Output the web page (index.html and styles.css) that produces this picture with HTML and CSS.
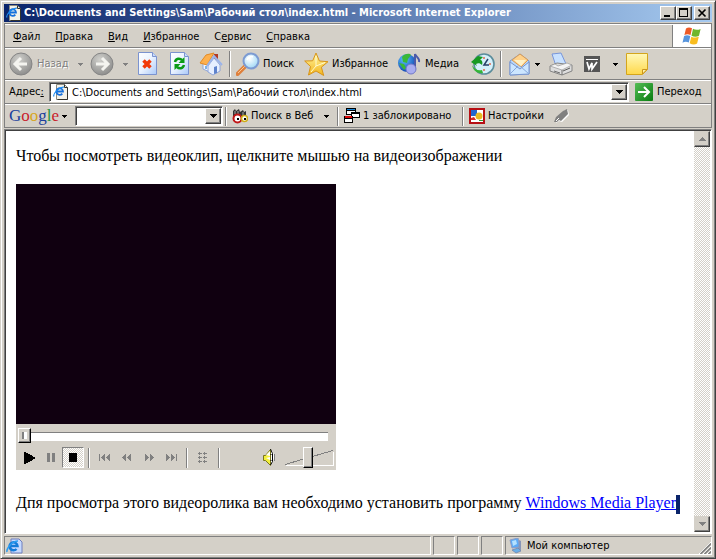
FILE: index.html
```html
<!DOCTYPE html>
<html lang="ru">
<head>
<meta charset="utf-8">
<title>C:\Documents and Settings\Sam\Рабочий стол\index.html - Microsoft Internet Explorer</title>
<link rel="stylesheet" href="styles.css">
</head>
<body>
<svg class="defs" aria-hidden="true">
  <defs>
    <linearGradient id="sheet" x1="0" y1="0" x2="1" y2="1"><stop offset="0" stop-color="#fff"/><stop offset=".5" stop-color="#e9f2ff"/><stop offset="1" stop-color="#a9c8f8"/></linearGradient>
    <radialGradient id="disc" cx=".4" cy=".3" r=".8"><stop offset="0" stop-color="#d0d0cc"/><stop offset=".6" stop-color="#a4a4a2"/><stop offset="1" stop-color="#858585"/></radialGradient>
    <linearGradient id="gold" x1="0" y1="0" x2="0" y2="1"><stop offset="0" stop-color="#fff6a0"/><stop offset="1" stop-color="#f3b51d"/></linearGradient>
    <linearGradient id="note" x1="0" y1="0" x2="0" y2="1"><stop offset="0" stop-color="#fff8b8"/><stop offset="1" stop-color="#ffd84a"/></linearGradient>
    <radialGradient id="lens" cx=".4" cy=".35" r=".7"><stop offset="0" stop-color="#fff"/><stop offset="1" stop-color="#9bd6f5"/></radialGradient>
    <radialGradient id="globe" cx=".35" cy=".3" r=".8"><stop offset="0" stop-color="#5fc3ff"/><stop offset="1" stop-color="#0536a8"/></radialGradient>
    <linearGradient id="go" x1="0" y1="0" x2="1" y2="1"><stop offset="0" stop-color="#55bd55"/><stop offset="1" stop-color="#087c10"/></linearGradient>
    <symbol id="page-e" viewBox="0 0 16 16">
      <path d="M3.5.5h8l3 3v12h-11z" fill="#f4f2ea" stroke="#8b8b80"/>
      <path d="M11.5.5v3h3M14.5 3.500v12h-10" fill="none" stroke="#34342e"/>
      <path d="M9.300 9.600a3.300 3.300 0 1 1 .7-2.100H4" fill="none" stroke="#1670dc" stroke-width="1.800"/>
      <path d="M1 12.500C-.5 10 6 3.200 11 3" fill="none" stroke="#1c8cf0" stroke-width="1.200"/>
    </symbol>
    <symbol id="down" viewBox="0 0 7 4"><path d="M0 0h7v1h-1v1h-1v1h-1v1h-1v-1h-1v-1h-1v-1h-1z" fill="currentColor" shape-rendering="crispEdges"/></symbol>
    <symbol id="down-s" viewBox="0 0 5 3"><path d="M0 0h5v1h-1v1h-1v1h-1v-1h-1v-1h-1z" fill="currentColor" shape-rendering="crispEdges"/></symbol>
    <symbol id="rew" viewBox="0 0 10 7"><path d="M4 0v7h-1v-1h-1v-1h-1v-1h-1v-1h1v-1h1v-1h1v-1zM9 0v7h-1v-1h-1v-1h-1v-1h-1v-1h1v-1h1v-1h1v-1z" fill="#808080" shape-rendering="crispEdges"/></symbol>
  </defs>
</svg>
<div class="window">
  <header class="titlebar">
    <svg class="i16"><use href="#page-e"/></svg>
    <h1>C:\Documents and Settings\Sam\Рабочий стол\index.html - Microsoft Internet Explorer</h1>
    <div class="caption-buttons">
      <button aria-label="Свернуть"><svg width="12" height="10" shape-rendering="crispEdges"><path d="M2 7h6v2h-6z"/></svg></button>
      <button aria-label="Развернуть"><svg width="12" height="10" shape-rendering="crispEdges"><path d="M1 0h9v9h-9zM2 2v6h7v-6z" fill-rule="evenodd"/></svg></button>
      <button class="close" aria-label="Закрыть"><svg width="12" height="10"><path d="M2.500 1.500l7 7m0-7l-7 7" stroke="#000" stroke-width="1.700"/></svg></button>
    </div>
  </header>

  <div class="bars">
    <div class="menu-row">
      <nav class="menu">
        <button><u>Ф</u>айл</button><button><u>П</u>равка</button><button><u>В</u>ид</button><button><u>И</u>збранное</button><button>С<u>е</u>рвис</button><button><u>С</u>правка</button>
      </nav>
      <div class="throbber">
        <svg width="22" height="20" viewBox="0 0 22 20"><path d="M5 2.500C7 1 9 1.200 11 2.300L9.500 9C7.500 8 5.500 8 3.400 9z" fill="#ee5a26"/><path d="M12 2.800c2.500 1.300 5 1.200 7.600.1L18 9.800c-2.500 1.200-5 1.100-7.500-.1z" fill="#70b62c"/><path d="M3.100 10c2-1 4-1 6.200 0L7.800 16.500c-2.200-1-4.200-1-6.300.2z" fill="#5795dd"/><path d="M10.300 10.700c2.500 1.100 5 1.200 7.500.1l-1.700 6.800c-2.500 1.300-5 1-7.400-.4z" fill="#f9bd20"/></svg>
      </div>
    </div>

    <div class="toolbar" role="toolbar">
      <button class="tool back" disabled>
        <svg width="24" height="24"><circle cx="12" cy="12" r="11" fill="url(#disc)" stroke="#858585"/><path d="M18 12H7m5-6l-6 6 6 6" fill="none" stroke="#f4f4f0" stroke-width="3"/></svg><span>Назад</span>
      </button>
      <button class="drop gray" aria-label="Список назад" disabled><svg width="5" height="3"><use href="#down-s"/></svg></button>
      <button class="tool forward" aria-label="Вперед" disabled><svg width="24" height="24"><circle cx="12" cy="12" r="11" fill="url(#disc)" stroke="#858585"/><path d="M6 12h11m-5-6l6 6-6 6" fill="none" stroke="#f4f4f0" stroke-width="3"/></svg></button>
      <button class="drop gray" aria-label="Список вперед" disabled><svg width="5" height="3"><use href="#down-s"/></svg></button>
      <button class="tool sheet" aria-label="Остановить"><svg width="20" height="24"><path d="M.5.500h14l4 4v18h-18z" fill="url(#sheet)" stroke="#7b93cf"/><path d="M14.500.5v4h4" fill="#c9dcfa" stroke="#7b93cf"/><path d="M5.500 8.500l7 7m0-7l-7 7" stroke="#f23a0a" stroke-width="3.500"/></svg></button>
      <button class="tool sheet" aria-label="Обновить"><svg width="20" height="24"><path d="M.5.500h14l4 4v18h-18z" fill="url(#sheet)" stroke="#7b93cf"/><path d="M14.500.5v4h4" fill="#c9dcfa" stroke="#7b93cf"/><path d="M5 10c1-4 5-4 7-2M14 13c-1 4-5 4-7 2" fill="none" stroke="#089b14" stroke-width="2.500"/><path d="M14.500 5v6h-6zM4.500 18v-6h6z" fill="#089b14"/></svg></button>
      <button class="tool home" aria-label="Домой"><svg width="24" height="24"><path d="M4 11l3-5 8 4v12l-11-5z" fill="#f3f7ff" stroke="#92a8d8"/><path d="M9 14l6-8 6 7v6l-7 4-5-3z" fill="#e6efff" stroke="#7d98d5" stroke-width=".8"/><path d="M15 2h4v7l-4-3z" fill="#b23a24"/><path d="M1 11L7 3l8-2-7 12z" fill="#fdb04e" stroke="#e28a25"/><path d="M8 14l7-10 8 9" fill="none" stroke="#9bb4ea" stroke-width="2"/><path d="M15 15l3-1v7l-3 1z" fill="#5f83cc"/><path d="M6 14h2v3H6z" fill="#7fb2e6"/></svg></button>
      <i class="sep"></i>
      <button class="tool search"><svg width="24" height="24"><path d="M1.500 22l8-8" stroke="#df803c" stroke-width="4" stroke-linecap="round"/><path d="M2 21l7-7" stroke="#ffc78c"/><circle cx="15" cy="9" r="7.500" fill="url(#lens)" stroke="#7d9bd2" stroke-width="2"/><path d="M11 8c1-3 4-4 6-3" fill="none" stroke="#fff" stroke-width="1.500"/></svg><span>Поиск</span></button>
      <button class="tool favorites"><svg width="25" height="25"><path d="M12 1l3.400 8 8.600.700-6.600 5.500 2.300 8.300L12 19l-7.500 4 2-8.500L.7 9l8-.2z" fill="url(#gold)" stroke="#d89418" stroke-linejoin="round"/><path d="M12 4v10l-5 6M12 14l9-3.500" fill="none" stroke="#fffbd0"/></svg><span>Избранное</span></button>
      <button class="tool media"><svg width="24" height="24"><circle cx="9" cy="11" r="9" fill="url(#globe)"/><path d="M4 5c3-4 8-4 9-2l-3 4-1 4-4-1zM1 11l5 1 2 4-2 2z" fill="#39b838"/><path d="M17 18V2c1 3 5 4 4 8" fill="none" stroke="#4b5aa9" stroke-width="2"/><circle cx="13" cy="17" r="5" fill="#a8adf0" stroke="#7178c8"/></svg><span>Медиа</span></button>
      <button class="tool history" aria-label="Журнал"><svg width="25" height="24"><circle cx="14" cy="12" r="10" fill="#d4effa" stroke="#5a8c9b" stroke-width="1.600"/><path d="M14 5v2m7 5h-2m-5 7v-2" stroke="#e46a4c" stroke-width="1.500"/><path d="M18 7l-4 6h5" fill="none" stroke="#263d66" stroke-width="1.500"/><path d="M1 10l7-6 5 1-3 3c2 0 3 2 2 5-2-2-4-2-6-1l1 2z" fill="#179a22"/><path d="M2 13c2 4 6 6 10 5l1 3C8 22 3 19 2 13z" fill="#36b538"/></svg></button>
      <i class="sep"></i>
      <button class="tool mail" aria-label="Почта"><svg width="22" height="24"><path d="M1 9l10-7 9 7v13L1 23z" fill="#b8d8fb" stroke="#7795cf"/><path d="M3 8l8-6 8 6-7 7z" fill="#ffd28b" stroke="#d89b55"/><path d="M5 8h12l-5 6z" fill="#fff1c5"/><path d="M1 10l10 7 9-7v12L1 23z" fill="#cce6ff" stroke="#7795cf"/><path d="M1 22l8-8m2 0l9 8" stroke="#86a8dc" fill="none"/></svg></button>
      <button class="drop" aria-label="Список почты"><svg width="5" height="3"><use href="#down-s"/></svg></button>
      <button class="tool printer" aria-label="Печать"><svg width="24" height="24"><path d="M3 2l9-1 5 11-10 2z" fill="#c8e1ff" stroke="#7896db"/><path d="M1 14l7-3 15 2v6l-10 4-12-4z" fill="#ddd" stroke="#858585"/><path d="M1 14l12 4 10-5-5-2-9 3-3-2z" fill="#f4f4f4" stroke="#999" stroke-width=".7"/><path d="M5 19l6 2m2-3v5" stroke="#6f6f6f"/><path d="M14 19l7-3" stroke="#5b5b5b"/></svg></button>
      <button class="tool word" aria-label="Правка в Word"><svg width="16" height="16"><path d="M0 0h16v16H0z" fill="#555"/><path d="M2 3.500h12" stroke="#fff"/><path d="M3 6l2 7 3-6v6l5-7" fill="none" stroke="#fff" stroke-width="1.700"/></svg></button>
      <button class="drop" aria-label="Список редакторов"><svg width="5" height="3"><use href="#down-s"/></svg></button>
      <button class="tool" aria-label="Заметка"><svg width="22" height="22"><path d="M.500.500h21v16l-5 5h-16z" fill="url(#note)" stroke="#d4a51c"/><path d="M16.500 21v-4.500h4.500z" fill="#fff2a5" stroke="#cc941d"/></svg></button>
    </div>

    <form class="address">
      <label for="url">Адрес<u>:</u></label>
      <div class="field">
        <svg class="i16"><use href="#page-e"/></svg>
        <input id="url" type="text" value="C:\Documents and Settings\Sam\Рабочий стол\index.html">
        <button type="button" class="raised" aria-label="Показать список"><svg width="7" height="4"><use href="#down"/></svg></button>
      </div>
      <button type="button" class="go"><svg width="18" height="18"><rect width="18" height="18" rx="1" fill="url(#go)"/><path d="M3 9h11M9 4l5 5-5 5" fill="none" stroke="#fff" stroke-width="2"/></svg><span>Переход</span></button>
    </form>

    <div class="google">
      <button class="logo"><span class="b">G</span><span class="r">o</span><span class="y">o</span><span class="b">g</span><span class="g">l</span><span class="r">e</span></button>
      <button class="drop" aria-label="Меню Google"><svg width="5" height="3"><use href="#down-s"/></svg></button>
      <div class="field query"><input type="text" aria-label="Запрос"><button class="raised" aria-label="История запросов"><svg width="7" height="4"><use href="#down"/></svg></button></div>
      <i class="sep"></i>
      <button class="gtool web"><svg width="16" height="16"><path d="M1 7V3l2-2 1 2 3-2 1 3 3-2 1 2 2-1v6H1z" fill="#333"/><path d="M3 3v3m3-3v3m5-2v3" stroke="#aaa"/><circle cx="5.500" cy="10.500" r="4" fill="#fff" stroke="#c01616" stroke-width="2"/><circle cx="12.500" cy="10.500" r="3" fill="#fff" stroke="#cfae15" stroke-width="1.500"/><path d="M5 10h2v2H5zm7 0h2v2h-2z"/></svg><span>Поиск в Веб</span></button>
      <button class="drop" aria-label="Виды поиска"><svg width="5" height="3"><use href="#down-s"/></svg></button>
      <i class="sep"></i>
      <button class="gtool popups"><svg width="16" height="16" shape-rendering="crispEdges"><path d="M2 0h10v7H2z"/><path d="M3 3h8v3H3z" fill="#fff"/><path d="M3 1h8v1H3z" fill="#1686d8"/><path d="M7 4h9v6H7z"/><path d="M8 6h7v3H8z" fill="#fff"/><path d="M0 8h9v7H0z"/><path d="M1 11h7v3H1z" fill="#fff"/><path d="M1 8h7v2H1z" fill="#d80808"/></svg><span>1 заблокировано</span></button>
      <i class="sep"></i>
      <button class="gtool settings"><svg width="16" height="16"><path d="M1 1h14v14H1z" fill="#fff" stroke="#b70f14" stroke-width="2"/><path d="M2 2h6v6H2z" fill="#2366ce"/><circle cx="10" cy="8" r="3.500" fill="#e8b922"/><path d="M2 10l3-1 2 3H2z" fill="#d62c25"/><path d="M10 12h4v1h-4z" fill="#2d9f3d"/></svg><span>Настройки</span></button>
      <button class="gtool" aria-label="Выделить"><svg width="16" height="16"><path d="M2 15l1-5 8-8h3l1 5-7 7-3-1z" fill="#fff"/><path d="M0 14l2-5 7-6 4-2 1 5-7 7-2-1-2 2z" fill="#808080"/><path d="M2 13l3-3" stroke="#fff"/></svg></button>
    </div>
  </div>

  <main class="viewport">
    <article class="page">
      <p>Чтобы посмотреть видеоклип, щелкните мышью на видеоизображении</p>
      <section class="player" aria-label="Проигрыватель">
        <div class="screen"></div>
        <div class="controls">
          <div class="seek"><input type="range" value="0" aria-label="Позиция"></div>
          <div class="keys">
            <button class="key" aria-label="Воспроизвести"><svg width="11" height="12" shape-rendering="crispEdges"><path d="M0 0h2v1h2v1h2v1h2v1h1v1h2v2H9v1H8v1H6v1H4v1H2v1H0z"/></svg></button>
            <button class="key" aria-label="Пауза" disabled><svg width="8" height="9"><path d="M0 0h3v9H0zM5 0h3v9H5z" fill="#808080"/></svg></button>
            <button class="key stop" aria-label="Стоп"><svg width="8" height="9"><path d="M0 0h8v9H0z"/></svg></button>
            <i class="sep"></i>
            <button class="key" aria-label="Предыдущий" disabled><svg width="12" height="7"><path d="M0 0h1v7H0z" fill="#808080"/><use href="#rew" x="2" width="10" height="7"/></svg></button>
            <button class="key" aria-label="Назад" disabled><svg width="10" height="7"><use href="#rew"/></svg></button>
            <button class="key" aria-label="Вперед" disabled><svg class="flip" width="10" height="7"><use href="#rew"/></svg></button>
            <button class="key" aria-label="Следующий" disabled><svg class="flip" width="12" height="7"><path d="M0 0h1v7H0z" fill="#808080"/><use href="#rew" x="2" width="10" height="7"/></svg></button>
            <i class="sep"></i>
            <button class="key" aria-label="Маркеры" disabled><svg width="10" height="11"><path d="M0 1.500h4m1 0h4M0 5.500h4m1 0h4M0 9.500h4m1 0h4M1.500 0v3M6.500 0v3M1.500 4v3M6.500 4v3M1.500 8v3M6.500 8v3" stroke="#808080" shape-rendering="crispEdges"/></svg></button>
            <i class="sep"></i>
            <button class="mute" aria-label="Звук"><svg width="12" height="17"><path d="M.5 6.500h2l5-6v16l-5-5h-2z" fill="#f3ef3c" stroke="#77751c"/><path d="M3 6l4-4v5zM3 9l4-1v3z" fill="#fff"/><path d="M8 0c4 5 4 11 0 16z" fill="#fff"/><path d="M7.500 0l2 4.500v8l-2 3.500M8 5v1m0 5v1" fill="none" stroke="#000"/><path d="M11.500 5v7" stroke="#808080"/></svg></button>
            <div class="volume"><svg width="49" height="16" shape-rendering="crispEdges"><path d="M1 15.500h47.500V2" fill="none" stroke="#fff"/><path d="M0 14.500L48 .5" stroke="#808080"/></svg><input type="range" value="47" aria-label="Громкость"></div>
          </div>
        </div>
      </section>
      <p class="note">Дпя просмотра этого видеоролика вам необходимо установить программу <a href="#player">Windows Media Player</a><i class="caret"></i></p>
    </article>
    <div class="scrollbar">
      <button class="raised" aria-label="Вверх" disabled><svg class="up" width="7" height="4"><use href="#down"/></svg></button>
      <button class="raised" aria-label="Вниз" disabled><svg width="7" height="4"><use href="#down"/></svg></button>
    </div>
  </main>

  <footer class="status">
    <div class="pane wide"><svg width="17" height="16"><path d="M5 1h8l3 3v11H5z" fill="#c5d9ff" stroke="#6e7fbd"/><path d="M10.500 11a4 4 0 1 1 1-3H3.500" fill="none" stroke="#147bd8" stroke-width="2.500"/><path d="M1 14C0 10 7 3 12 3" fill="none" stroke="#2b9df0" stroke-width="1.500"/></svg></div>
    <div class="pane"></div><div class="pane"></div><div class="pane"></div>
    <div class="pane zone"><svg width="17" height="16"><path d="M2 2l8-2 2 9-8 1z" fill="#5ca9f4" stroke="#8d9cc5"/><path d="M4 3l4-1 1 4-4 2z" fill="#b4e1ff"/><path d="M11 2l2 1v9l-3 1z" fill="#8795b8"/><path d="M4 12l6-2 3 3-5 2z" fill="#68aee8" stroke="#6d80a8" stroke-width=".7"/></svg><span>Мой компьютер</span><svg class="grip" width="12" height="12"><path d="M0 12L12 0M4 12l8-8M8 12l4-4" stroke="#fff"/><path d="M1.500 12L12 1.500M5.500 12L12 5.500M9.500 12L12 9.500" stroke="#808080" stroke-width="1.600"/></svg></div>
  </footer>
</div>
</body>
</html>
```
FILE: styles.css
```css
* { box-sizing: border-box; }

:root {
  --face: #d4d0c8;
  --shadow: #808080;
  --dark: #404040;
}

body {
  margin: 0;
  font: 11px/14px "DejaVu Sans Condensed", "DejaVu Sans", sans-serif;
  color: #000;
}

.defs { position: absolute; width: 0; height: 0; }
svg { display: block; flex: none; }
.i16 { width: 16px; height: 16px; }

button {
  display: flex;
  align-items: center;
  flex: none;
  margin: 0;
  padding: 0;
  border: 0;
  background: none;
  font: inherit;
  color: inherit;
  white-space: nowrap;
}

input { font: inherit; color: inherit; }

.window {
  display: flex;
  flex-direction: column;
  min-height: 100vh;
  padding: 3px;
  background: var(--face);
  border: 1px solid var(--face);
  border-right-color: var(--dark);
  border-bottom-color: var(--dark);
  box-shadow: inset 1px 1px #fff, inset -1px -1px var(--shadow);
}

.titlebar {
  display: flex;
  align-items: center;
  height: 18px;
  padding: 0 2px;
  background: linear-gradient(90deg, #0a246a, #a6caf0);
  color: #fff;
}

h1 {
  flex: 1;
  min-width: 0;
  margin: 0 0 0 2px;
  overflow: hidden;
  font: inherit;
  font-weight: bold;
  white-space: nowrap;
}

.caption-buttons { display: flex; }

.caption-buttons button, .raised {
  justify-content: center;
  width: 16px;
  height: 14px;
  background: var(--face);
  border: 1px solid;
  border-color: #fff var(--dark) var(--dark) #fff;
  box-shadow: inset -1px -1px var(--shadow);
}

.caption-buttons .close { margin-left: 2px; }

.bars {
  margin-top: 1px;
  border: 1px solid var(--shadow);
}

.bars > * {
  display: flex;
  align-items: center;
  border-top: 1px solid #fff;
  border-bottom: 1px solid var(--shadow);
}

.bars > :last-child { border-bottom: 0; }
.menu-row { height: 24px; }
.menu { display: flex; flex: 1; gap: 15px; padding: 1px 0 0 8px; }
.menu button { display: block; }

.throbber {
  display: flex;
  align-items: center;
  justify-content: center;
  align-self: stretch;
  width: 39px;
  border-left: 1px solid var(--shadow);
  background: #fff;
}

.toolbar { height: 32px; padding-left: 4px; }
.tool, .gtool { gap: 3px; }
.back { width: 65px; gap: 4px; color: var(--shadow); text-shadow: 1px 1px #fff; }
.drop { justify-content: center; width: 12px; height: 20px; }
.gray { color: var(--shadow); }
.forward { width: 29px; margin-left: 4px; }
.toolbar .forward + .drop { margin-right: 7px; }
.sheet { width: 32px; }
.home { width: 29px; margin-right: 1px; margin-left: -3px; }

.sep {
  flex: none;
  width: 2px;
  height: 26px;
  border-left: 1px solid var(--shadow);
  border-right: 1px solid #fff;
}

.search { width: 73px; padding-left: 5px; }
.favorites { width: 94px; }
.media { width: 72px; }
.history { width: 30px; }
.mail { width: 22px; margin-left: 7px; }
.mail + .drop { margin-right: 6px; }
.printer { width: 35px; }
.word { width: 25px; }
.word + .drop { margin-right: 5px; }

.address { height: 24px; padding-left: 4px; }
.address label { width: 40px; }

.field {
  display: flex;
  flex: 1;
  align-items: center;
  height: 20px;
  padding: 1px;
  background: #fff;
  border: 1px solid;
  border-color: var(--shadow) #fff #fff var(--shadow);
  box-shadow: inset 1px 1px var(--dark);
}

.field input {
  flex: 1;
  min-width: 0;
  height: 16px;
  padding: 0 3px;
  border: 0;
  outline: 0;
  background: none;
}

.field .i16 { margin-left: 2px; }
.raised { height: 16px; }
.go { width: 76px; margin-left: 6px; gap: 4px; }

.google { height: 23px; padding-left: 4px; }
.google .sep { height: 19px; }
.logo { width: 49px; font: 17px/20px "Liberation Serif", serif; }
.logo .b { color: #1a3e9c; }
.logo .r { color: #c8202c; }
.logo .y { color: #d8a51c; }
.logo .g { color: #1f9440; }
.query { flex: none; width: 148px; margin: 0 2px 0 5px; }
.web { width: 93px; padding-left: 5px; }
.web + .drop { margin-right: 5px; }
.popups { width: 123px; padding-left: 5px; }
.settings { width: 90px; padding-left: 5px; }

.viewport {
  display: flex;
  flex: 1;
  margin-top: 1px;
  padding: 1px;
  background: #fff;
  border: 1px solid;
  border-color: var(--shadow) #fff #fff var(--shadow);
  box-shadow: inset 1px 1px var(--dark);
}

.page {
  flex: 1;
  min-width: 0;
  padding: 16px 10px 0;
  font: 16px/18px "Liberation Serif", serif;
}

.page p { margin: 0; }
.page a { color: #00f; }
.page .note { margin-top: 24px; white-space: nowrap; }

.caret {
  display: inline-block;
  width: 4px;
  height: 19px;
  background: #0a246a;
  vertical-align: middle;
}

.player { width: 320px; margin-top: 19px; }
.screen { height: 240px; background: #100010; }
.controls { height: 46px; padding: 4px 2px 0; background: var(--face); }
.seek { position: relative; height: 15px; padding: 4px 6px 0; }

.seek::before {
  content: "";
  display: block;
  height: 8px;
  background: #fff;
  border-top: 1px solid var(--shadow);
}

input[type="range"] { -webkit-appearance: none; appearance: none; margin: 0; background: none; }

.seek input { position: absolute; inset: 0; width: 100%; height: 15px; }

.seek input::-webkit-slider-thumb {
  -webkit-appearance: none;
  width: 13px;
  height: 15px;
  border: 1px solid;
  border-color: #fff #000 #000 #fff;
  background: linear-gradient(#808080, #808080) 3px 3px / 2px 7px no-repeat,
    linear-gradient(#fff, #fff) 5px 3px / 3px 7px no-repeat, var(--face);
  box-shadow: inset -1px -1px var(--shadow);
}

.keys { display: flex; align-items: center; height: 21px; margin-top: 4px; }
.keys .sep { height: 20px; margin: 0 4px; }
.key { justify-content: center; width: 22px; height: 21px; }

.stop {
  border: 1px solid;
  border-color: var(--shadow) #fff #fff var(--shadow);
}

.stop, .scrollbar {
  background: repeating-conic-gradient(#fff 0 25%, var(--face) 0 50%) 0 0 / 2px 2px;
}

.flip { transform: scaleX(-1); }
.up { transform: scaleY(-1); }
.mute { margin-left: 39px; }
.volume { position: relative; margin-left: 10px; }
.volume input { position: absolute; left: 0; top: -3px; width: 48px; height: 21px; }

.volume input::-webkit-slider-thumb {
  -webkit-appearance: none;
  width: 10px;
  height: 21px;
  background: var(--face);
  border: 1px solid;
  border-color: #fff #000 #000 #fff;
  box-shadow: inset -1px -1px var(--shadow);
}

.scrollbar { display: flex; flex-direction: column; justify-content: space-between; width: 16px; }
.scrollbar .raised { color: var(--shadow); border-color: var(--face) var(--dark) var(--dark) var(--face); }

.status { display: flex; gap: 2px; height: 21px; padding-top: 2px; }

.pane {
  display: flex;
  align-items: center;
  width: 22px;
  border: 1px solid;
  border-color: var(--shadow) #fff #fff var(--shadow);
}

.wide { flex: 1; padding-left: 1px; }
.zone { width: 207px; gap: 2px; padding-left: 2px; }
.grip { align-self: flex-end; margin-left: auto; }
```
